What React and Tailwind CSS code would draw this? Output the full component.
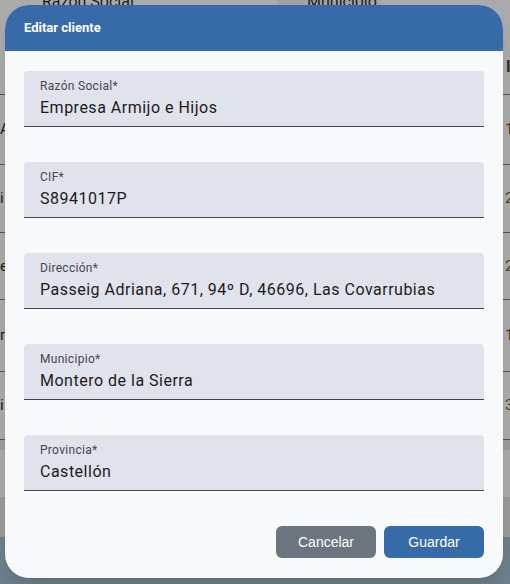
import React from 'react'

const fields = [
  { label: 'Razón Social*', value: 'Empresa Armijo e Hijos' },
  { label: 'CIF*', value: 'S8941017P' },
  { label: 'Dirección*', value: 'Passeig Adriana, 671, 94º D, 46696, Las Covarrubias' },
  { label: 'Municipio*', value: 'Montero de la Sierra' },
  { label: 'Provincia*', value: 'Castellón' },
]

const rows = [
  { h: 'h-[70px]', left: 'A', right: '1' },
  { h: 'h-[68px]', left: 'i', right: '2' },
  { h: 'h-[67px]', left: 'e', right: '2' },
  { h: 'h-[72px]', left: 'r', right: '1' },
  { h: 'h-[68px]', left: 'i', right: '3' },
]

function Field({ label, value }) {
  return (
    <div className="h-[56px] rounded-t-[4px] bg-[#e0e2ec] border-b border-[#49454f] px-4 pt-[7px]">
      <div className="text-[12px] leading-[16px] tracking-[0.3px] text-[#49454f]">{label}</div>
      <div className="mt-[2px] text-[16px] leading-[24px] tracking-[0.5px] text-[#1d1b20] whitespace-nowrap overflow-hidden">
        {value}
      </div>
    </div>
  )
}

function Backdrop() {
  return (
    <div className="w-[510px] h-[584px] flex flex-col bg-[#aaaaaa] font-['Roboto',sans-serif] text-[#1a1a1a] overflow-hidden">
      {/* Filters */}
      <div className="h-[40px] flex text-[16px] leading-none">
        <div className="w-[277px] pl-[42px] pt-[0px] -mt-[6px]">Razón Social:</div>
        <div className="w-[103px] bg-[#a2a2a2] pl-[30px] -mt-[6px]">Municipio:</div>
        <div className="flex-1" />
      </div>
      {/* Head */}
      <div className="h-[55px] flex justify-end items-center border-b border-[#555555] pr-0">
        <span className="font-bold text-[#3a2a10] w-[4px] overflow-hidden">I</span>
      </div>
      {rows.map((r, i) => (
        <div key={i} className={`${r.h} flex items-center justify-between border-b border-[#555555] text-[15px]`}>
          <span className="w-[5px] overflow-hidden">{r.left}</span>
          <span className="w-[5px] overflow-hidden text-[#4a3a20]">{r.right}</span>
        </div>
      ))}
      <div className="h-[10px] bg-[#9c9c9c]" />
      <div className="h-[47px] bg-[#aaaaaa]" />
      <div className="h-[40px] bg-[#9a9a9a]" />
      <div className="flex-1 bg-[#6c7f8a]" />
    </div>
  )
}

export default function App() {
  return (
    <div className="relative w-[510px] h-[584px] overflow-hidden">
      <Backdrop />
      <div className="absolute left-[5px] top-[5px] w-[498px] h-[573px] rounded-[24px] overflow-hidden bg-[#f7f9fb] shadow-lg flex flex-col">
        <div className="h-[46px] bg-[#366aa9] flex items-center px-[19px]">
          <h2 className="text-white font-bold text-[13px] font-['Roboto',sans-serif]">Editar cliente</h2>
        </div>
        <div className="flex-1 flex flex-col px-[19px] pt-[20px] gap-[35px] font-['Roboto',sans-serif]">
          {fields.map((f) => (
            <Field key={f.label} label={f.label} value={f.value} />
          ))}
        </div>
        <div className="flex justify-end gap-2 px-[19px] pb-[20px] font-['Liberation_Sans',Arial,sans-serif]">
          <button className="w-[100px] h-[32px] rounded-[6px] bg-[#6c757d] text-white text-[14px]">Cancelar</button>
          <button className="w-[100px] h-[32px] rounded-[6px] bg-[#366aa9] text-white text-[14px]">Guardar</button>
        </div>
      </div>
    </div>
  )
}
